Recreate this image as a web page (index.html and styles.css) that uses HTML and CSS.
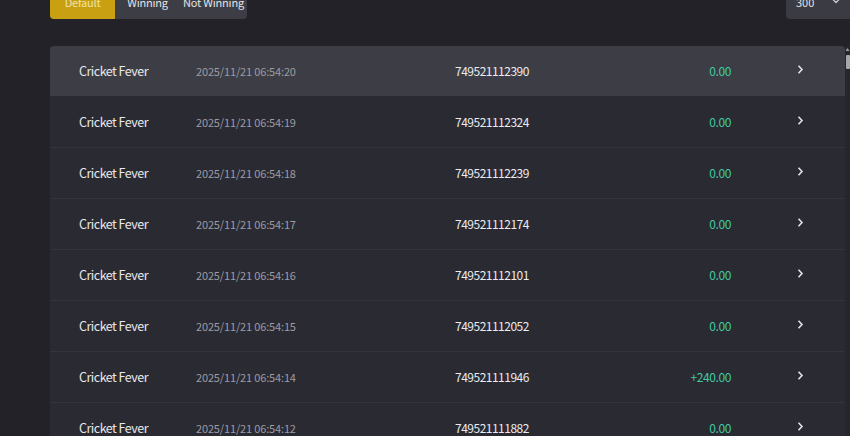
FILE: index.html
```html
<!DOCTYPE html>
<html lang="en">
<head>
<meta charset="utf-8">
<title>Bet History</title>
<link rel="stylesheet" href="styles.css">
</head>
<body>
<div class="page">
  <div class="toolbar">
    <div class="toggle">
      <button class="toggle-btn is-active">Default</button>
      <button class="toggle-btn">Winning</button>
      <button class="toggle-btn wide">Not Winning</button>
    </div>
    <div class="page-size">
      <span>300</span>
      <svg class="caret" width="8" height="6" viewBox="0 0 8 6"><path d="M1 1.5 L4 4.5 L7 1.5" fill="none" stroke="#c8c8cc" stroke-width="1.3"/></svg>
    </div>
  </div>

  <div class="table-wrap">
    <div class="rows">
      <div class="row is-hover">
        <span class="c-name">Cricket Fever</span><span class="c-date">2025/11/21 06:54:20</span><span class="c-id">749521112390</span><span class="c-amt">0.00</span><span class="c-go"><svg width="9" height="11" viewBox="0 0 9 11"><path d="M2.5 1.8 L6 5.5 L2.5 9.2" fill="none" stroke="#e2e2e6" stroke-width="1.6"/></svg></span>
      </div>
      <div class="row">
        <span class="c-name">Cricket Fever</span><span class="c-date">2025/11/21 06:54:19</span><span class="c-id">749521112324</span><span class="c-amt">0.00</span><span class="c-go"><svg width="9" height="11" viewBox="0 0 9 11"><path d="M2.5 1.8 L6 5.5 L2.5 9.2" fill="none" stroke="#e2e2e6" stroke-width="1.6"/></svg></span>
      </div>
      <div class="row">
        <span class="c-name">Cricket Fever</span><span class="c-date">2025/11/21 06:54:18</span><span class="c-id">749521112239</span><span class="c-amt">0.00</span><span class="c-go"><svg width="9" height="11" viewBox="0 0 9 11"><path d="M2.5 1.8 L6 5.5 L2.5 9.2" fill="none" stroke="#e2e2e6" stroke-width="1.6"/></svg></span>
      </div>
      <div class="row">
        <span class="c-name">Cricket Fever</span><span class="c-date">2025/11/21 06:54:17</span><span class="c-id">749521112174</span><span class="c-amt">0.00</span><span class="c-go"><svg width="9" height="11" viewBox="0 0 9 11"><path d="M2.5 1.8 L6 5.5 L2.5 9.2" fill="none" stroke="#e2e2e6" stroke-width="1.6"/></svg></span>
      </div>
      <div class="row">
        <span class="c-name">Cricket Fever</span><span class="c-date">2025/11/21 06:54:16</span><span class="c-id">749521112101</span><span class="c-amt">0.00</span><span class="c-go"><svg width="9" height="11" viewBox="0 0 9 11"><path d="M2.5 1.8 L6 5.5 L2.5 9.2" fill="none" stroke="#e2e2e6" stroke-width="1.6"/></svg></span>
      </div>
      <div class="row">
        <span class="c-name">Cricket Fever</span><span class="c-date">2025/11/21 06:54:15</span><span class="c-id">749521112052</span><span class="c-amt">0.00</span><span class="c-go"><svg width="9" height="11" viewBox="0 0 9 11"><path d="M2.5 1.8 L6 5.5 L2.5 9.2" fill="none" stroke="#e2e2e6" stroke-width="1.6"/></svg></span>
      </div>
      <div class="row">
        <span class="c-name">Cricket Fever</span><span class="c-date">2025/11/21 06:54:14</span><span class="c-id">749521111946</span><span class="c-amt">+240.00</span><span class="c-go"><svg width="9" height="11" viewBox="0 0 9 11"><path d="M2.5 1.8 L6 5.5 L2.5 9.2" fill="none" stroke="#e2e2e6" stroke-width="1.6"/></svg></span>
      </div>
      <div class="row">
        <span class="c-name">Cricket Fever</span><span class="c-date">2025/11/21 06:54:12</span><span class="c-id">749521111882</span><span class="c-amt">0.00</span><span class="c-go"><svg width="9" height="11" viewBox="0 0 9 11"><path d="M2.5 1.8 L6 5.5 L2.5 9.2" fill="none" stroke="#e2e2e6" stroke-width="1.6"/></svg></span>
      </div>
    </div>
    <div class="scrollbar">
      <svg class="sb-up" width="5" height="5" viewBox="0 0 5 5"><path d="M0.5 4 L2.5 1 L4.5 4 Z" fill="#9a9aa0"/></svg>
      <div class="sb-thumb"></div>
    </div>
  </div>
</div>
</body>
</html>
```

FILE: styles.css
```css
* {
  box-sizing: border-box;
}

html, body {
  margin: 0;
  padding: 0;
  background: #222228;
  overflow: hidden;
}

body {
  width: 850px;
  height: 436px;
  font-family: "Noto Sans CJK SC", "Noto Sans", sans-serif;
  color: #e6e6e8;
}

.page {
  padding-left: 50px;
}

/* filter toggle + page size, partly scrolled out of view */
.toolbar {
  display: flex;
  justify-content: space-between;
  align-items: flex-end;
  margin-top: -15px;
  height: 34px;
}

.toggle {
  display: flex;
  height: 34px;
  background: #3d3e45;
  border-radius: 0 0 4px 4px;
  overflow: hidden;
}

.toggle-btn {
  width: 65px;
  height: 34px;
  border: 0;
  padding: 0;
  background: transparent;
  color: #e2e2e6;
  font-family: inherit;
  font-size: 11px;
  letter-spacing: -0.2px;
  line-height: 34px;
  white-space: nowrap;
}

.toggle-btn.wide {
  width: 67px;
}

.toggle-btn.is-active {
  background: #c9a012;
  color: #f1e2a6;
}

.page-size {
  width: 64px;
  height: 34px;
  background: #3b3c43;
  border-radius: 0 0 0 4px;
  display: flex;
  align-items: center;
  justify-content: space-between;
  padding: 0 10px 0 10px;
  font-size: 11px;
  color: #e2e2e6;
}

.caret {
  margin-top: -2px;
}

/* bet list */
.table-wrap {
  display: flex;
  margin-top: 27px;
}

.rows {
  width: 795px;
  flex: none;
}

.row {
  display: grid;
  grid-template-columns: 117px 259px 176px 100px 65px 21px;
  align-items: center;
  height: 51px;
  padding-left: 29px;
  background: #2a2a33;
  border-bottom: 1px solid #34343f;
  font-size: 12px;
  line-height: 1;
  white-space: nowrap;
}

.row.is-hover {
  background: #3d3d45;
  border-bottom-color: #2a2a33;
  border-radius: 4px 4px 0 0;
}

.c-name {
  color: #e8e8ea;
  font-size: 12.5px;
  letter-spacing: -0.5px;
}

.c-date {
  color: #9c9ca2;
  font-size: 11px;
  letter-spacing: -0.15px;
}

.c-id {
  color: #ececee;
  font-size: 12px;
  letter-spacing: -0.5px;
}

.c-amt {
  text-align: right;
  color: #3fcba0;
  font-size: 12px;
  letter-spacing: -0.4px;
}

.c-go {
  grid-column: 6;
  display: flex;
  align-items: center;
  margin-top: -3px;
}

.scrollbar {
  width: 5px;
  background: #26262c;
  display: flex;
  flex-direction: column;
  align-items: center;
  padding-top: 1px;
  height: 400px;
}

.sb-up {
  display: block;
}

.sb-thumb {
  width: 4px;
  height: 14px;
  margin-top: 3px;
  background: #a6a6ab;
  border-radius: 1px;
}
```
